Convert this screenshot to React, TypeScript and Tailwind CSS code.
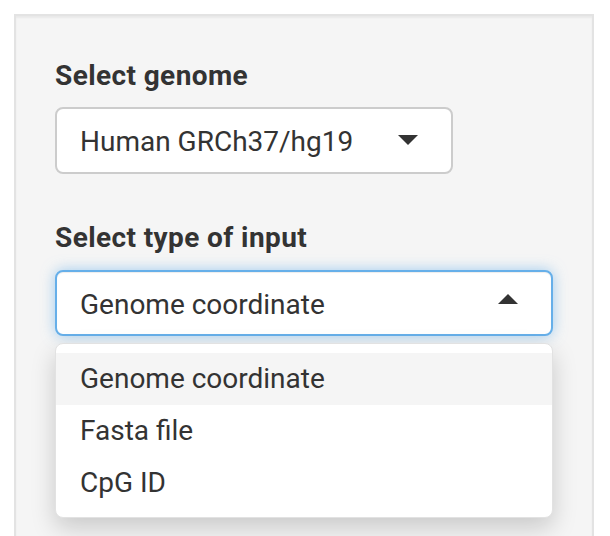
import React from "react";

function Caret({ up }: { up?: boolean }) {
  return (
    <svg width="20" height="10" viewBox="0 0 20 10" className={up ? "-translate-y-[4px]" : "-translate-y-[1px]"}>
      {up ? <polygon points="0,10 20,10 10,0" fill="#333333" /> : <polygon points="0,0 20,0 10,10" fill="#333333" />}
    </svg>
  );
}

export default function App() {
  const items = ["Genome coordinate", "Fasta file", "CpG ID"];
  return (
    <div className="h-[536px] overflow-hidden bg-white pt-[14px] pl-[14px] pr-[16px] font-['Roboto','Liberation_Sans',sans-serif] text-[#333333]">
      <div className="h-[620px] border-2 border-[#e3e3e3] bg-[#f5f5f5] shadow-[inset_0_2px_2px_rgba(0,0,0,0.05)] px-[39px] pt-[40px]">
        <div className="h-[40px] leading-[40px] text-[28px] font-bold tracking-[0.4px]">Select genome</div>
        <div className="mt-[11px] w-[398px] h-[67px] border-2 border-[#cccccc] rounded-[8px] bg-white flex items-center justify-between pl-[23px] pr-[33px]">
          <span className="text-[28px] leading-[33px] translate-y-[1px]">Human GRCh37/hg19</span>
          <Caret />
        </div>
        <div className="mt-[44px] h-[40px] leading-[40px] text-[28px] font-bold tracking-[0.4px]">Select type of input</div>
        <div className="relative mt-[12px]">
          <div className="h-[66px] border-2 border-[#66afe9] rounded-[8px] bg-white flex items-center justify-between pl-[23px] pr-[33px] shadow-[inset_0_1px_1px_rgba(0,0,0,0.075),0_0_14px_rgba(102,175,233,0.6)]">
            <span className="text-[28px] leading-[33px] translate-y-[1px]">Genome coordinate</span>
            <Caret up />
          </div>
          <div className="absolute left-0 right-0 top-[73px] border border-[#e2e2e2] rounded-[8px] bg-white pt-[9px] pb-[8px] shadow-[0_10px_24px_rgba(0,0,0,0.18)]">
            {items.map((t, i) => (
              <div
                key={t}
                className={
                  i === 0
                    ? "h-[52px] pb-[1px] flex items-center pl-[24px] bg-[#f5f5f5] text-[28px] leading-[33px]"
                    : "h-[52px] pb-[1px] flex items-center pl-[24px] text-[28px] leading-[33px]"
                }
              >
                {t}
              </div>
            ))}
          </div>
        </div>
      </div>
    </div>
  );
}
